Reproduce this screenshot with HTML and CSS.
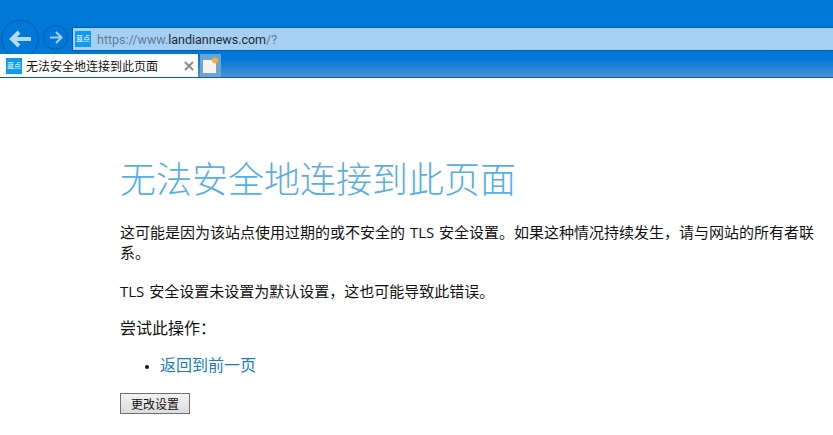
FILE: index.html
```html
<!DOCTYPE html>
<html>
<head>
<meta charset="utf-8">
<title>无法安全地连接到此页面</title>
<meta name="viewport" content="width=device-width, initial-scale=1">
<link rel="stylesheet" href="styles.css">
</head>
<body>

<header class="chrome">
  <div class="navrow">
    <div class="circle back">
      <svg width="22" height="18" viewBox="0 0 22 18"><path d="M10 2 3 9l7 7M3.500 9H22" fill="none" stroke="#b5d9f5" stroke-width="4"/></svg>
    </div>
    <div class="circle forward">
      <svg width="14" height="13" viewBox="0 0 14 13"><path d="M7 1l5.500 5.500L7 12M12 6.500H1" fill="none" stroke="#9ecbee" stroke-width="2.200"/></svg>
    </div>
    <div class="address">
      <span class="favicon">蓝点</span>
      <span class="url">https://www.<b>landiannews.com</b>/?</span>
    </div>
  </div>
  <div class="tabrow">
    <div class="tab">
      <span class="favicon">蓝点</span>
      <span class="tabtitle">无法安全地连接到此页面</span>
      <svg class="close" width="10" height="10" viewBox="0 0 10 10"><path d="M1 1l8 8M9 1l-8 8" stroke="#8a8a8a" stroke-width="2"/></svg>
    </div>
    <div class="newtab">
      <svg width="17" height="17" viewBox="0 0 17 17">
        <path d="M1 3h10l3 3v10H1z" fill="#f7f5ea"/>
        <circle cx="13" cy="3.500" r="3" fill="#f4b13e"/>
      </svg>
    </div>
  </div>
</header>

<main class="content">
  <h1>无法安全地连接到此页面</h1>
  <p class="text">这可能是因为该站点使用过期的或不安全的 TLS 安全设置。如果这种情况持续发生，请与网站的所有者联系。</p>
  <p class="text">TLS 安全设置未设置为默认设置，这也可能导致此错误。</p>
  <h2>尝试此操作：</h2>
  <ul class="actions">
    <li><a href="#">返回到前一页</a></li>
  </ul>
  <button class="button" type="button">更改设置</button>
</main>

</body>
</html>
```

FILE: styles.css
```css
body {
  margin: 0;
  background-color: #fff;
  color: #111;
  font-family: "Open Sans", "Noto Sans CJK SC", sans-serif;
  overflow: hidden;
}

.chrome {
  height: 78px;
  background: #0078d7;
}

.navrow {
  display: flex;
  align-items: flex-start;
  height: 31px;
  padding: 20px 0 0 1px;
}

.circle {
  display: flex;
  align-items: center;
  justify-content: center;
  box-sizing: border-box;
  border-radius: 50%;
  border: 1px solid #0a5ca6;
  flex-shrink: 0;
}

.back {
  width: 38px;
  height: 38px;
}

.forward {
  width: 25px;
  height: 25px;
  margin: 5px 4px 0 4px;
}

.address {
  display: flex;
  align-items: center;
  flex: 1;
  height: 24px;
  margin-top: 7px;
  padding-left: 2px;
  background: #a6d0f3;
  border: 1px solid #0a5ca6;
  border-right: 0;
  box-sizing: border-box;
}

.favicon {
  display: block;
  width: 16px;
  height: 16px;
  flex-shrink: 0;
  background: #0d9bf2;
  color: #fff;
  font-size: 7px;
  line-height: 16px;
  text-align: center;
  overflow: hidden;
}

.url {
  margin-left: 6px;
  font-family: Roboto, sans-serif;
  font-size: 12.5px;
  color: #5f7d96;
}

.url b {
  font-weight: normal;
  color: #1c2a36;
}

.tabrow {
  display: flex;
  align-items: flex-start;
  height: 27px;
  padding-top: 3px;
  box-sizing: border-box;
  background: linear-gradient(#0078d7 30%, #4a90d0);
  border-bottom: 1px solid #0a5ca6;
}

.tab {
  display: flex;
  align-items: center;
  width: 198px;
  height: 23px;
  padding-left: 6px;
  box-sizing: border-box;
  background: #fff;
}

.tabtitle {
  margin-left: 4px;
  font-size: 12px;
  white-space: nowrap;
}

.close {
  margin-left: 26px;
}

.newtab {
  display: flex;
  align-items: center;
  justify-content: center;
  width: 21px;
  height: 23px;
  margin-left: 2px;
  background: #6ea3d6;
}

.content {
  padding: 79px 18px 0 120px;
}

h1 {
  margin: 0;
  font-size: 36px;
  font-weight: 300;
  line-height: 46px;
  color: #58aee8;
}

.text {
  margin: 19px 0 0;
  font-size: 15px;
  line-height: 20px;
  word-spacing: 1px;
}

h2 {
  margin: 17px 0 0;
  font-size: 16px;
  font-weight: 400;
  line-height: 21px;
}

.actions {
  margin: 15px 0 0;
  padding-left: 40px;
  font-size: 16px;
  line-height: 22px;
}

.actions li::marker {
  font-size: 11px;
}

.actions a {
  color: #1a7dc4;
  text-decoration: none;
}

.button {
  display: block;
  width: 70px;
  height: 21px;
  margin-top: 17px;
  padding: 0;
  font-family: inherit;
  font-size: 12px;
  color: #111;
  background: linear-gradient(#f2f2f2, #dcdcdc);
  border: 1px solid #707070;
}
```
